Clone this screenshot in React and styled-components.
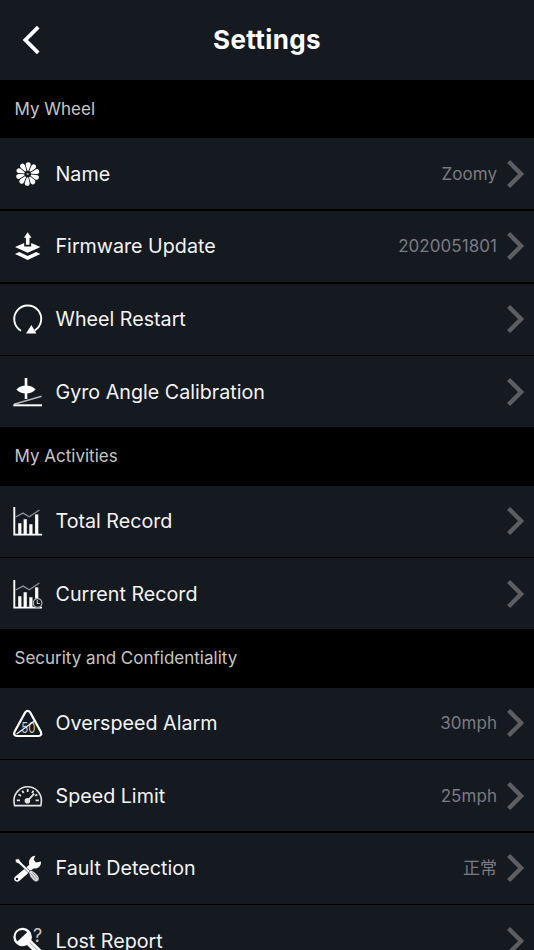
import React from 'react';
import styled, { createGlobalStyle } from 'styled-components';

const GlobalStyle = createGlobalStyle`
  html, body {
    margin: 0;
    padding: 0;
    background: #000;
  }
  body {
    height: 950px;
    overflow: hidden;
    font-family: Inter, "Noto Sans CJK SC", sans-serif;
  }
  * {
    box-sizing: border-box;
  }
`;

const Page = styled.main`
  width: 534px;
  height: 950px;
  overflow: hidden;
  background: #000;
`;

const Header = styled.header`
  display: grid;
  grid-template-columns: 64px 1fr 64px;
  align-items: center;
  height: 80px;
  background: #151920;
`;

const BackButton = styled.button`
  display: flex;
  align-items: center;
  height: 100%;
  padding: 0 0 0 20px;
  border: 0;
  background: none;
`;

const Title = styled.h1`
  margin: 0;
  color: #fff;
  font-size: 26px;
  font-weight: 700;
  line-height: 32px;
  letter-spacing: 0.4px;
  text-align: center;
`;

const SectionTitle = styled.h2`
  display: flex;
  align-items: center;
  height: 58.4px;
  margin: 0;
  padding: 0 14.5px 1px;
  color: #c6c6c6;
  font-size: 17px;
  font-weight: 400;
`;

const List = styled.div`
  display: flex;
  flex-direction: column;
  gap: 1.6px;
`;

const Row = styled.div`
  display: flex;
  align-items: center;
  height: 71px;
  padding: 0 8px 0 12px;
  background: #151920;
`;

const RowIcon = styled.svg`
  flex: none;
  width: 32px;
  height: 32px;
  margin-right: 11.5px;
  overflow: visible;
  fill: #fff;
`;

const Label = styled.span`
  flex: 1;
  color: #f4f4f5;
  font-size: 19.7px;
  line-height: 18px;
`;

const Value = styled.span`
  margin-right: 8px;
  color: #797c84;
  font-size: 17px;
  line-height: 24px;
  letter-spacing: 0.05px;
`;

const Arrow = styled.svg`
  flex: none;
  width: 21px;
  height: 30px;
  fill: none;
  stroke: #5d5e61;
  stroke-width: 4.4;
`;

const Line = styled.g`
  fill: none;
  stroke: ${(props) => props.$color || '#fff'};
  stroke-width: ${(props) => props.$width || 2};
`;

const Glyph = styled.text`
  fill: #c4c5c8;
  font-family: Inter, sans-serif;
  font-size: ${(props) => props.$size}px;
`;

const petals = Array.from({ length: 10 }, (_, i) => i * 36 + 3);

const FlowerIcon = () => (
  <RowIcon viewBox="0 0 32 32">
    {petals.map((angle) => (
      <path
        key={angle}
        transform={`rotate(${angle} 15.7 16)`}
        d="M15 12.6L13.3 7.2Q13 4.2 15.7 4.2Q18.4 4.2 18.1 7.2L16.4 12.6Z"
      />
    ))}
    <circle cx="15.7" cy="16" r="1.1" fill="#aaa" />
  </RowIcon>
);

const FirmwareIcon = () => (
  <RowIcon viewBox="0 0 32 32">
    <path d="M15.7 2.2L19.5 7.8H17.5V14.8H13.9V7.8H11.9Z" />
    <path d="M3 16.9L12.2 12.9V16.4H19.2V12.9L28.4 16.9L15.7 22.8Z" />
    <path d="M3 23.9L7.2 21.9L15.7 25.9L24.2 21.9L28.4 23.9L15.7 30.1Z" />
  </RowIcon>
);

const RestartIcon = () => (
  <RowIcon viewBox="0 0 32 32">
    <Line $width={1.9}>
      <path d="M9 27.7A13.5 13.5 0 1 1 22.6 27.6" />
    </Line>
    <path d="M14 30.4H24.4L19.4 22Z" />
  </RowIcon>
);

const GyroIcon = () => (
  <RowIcon viewBox="0 0 32 32">
    <path d="M12.7 2H15.3V23H12.7Z" />
    <path d="M4.4 13.5Q8 9.6 14 9.6T23.6 13.5Q20 17.4 14 17.4T4.4 13.5Z" />
    <Line $width={1.7} $color="#b5b6b8">
      <path d="M2 28.3L29.6 20.2" />
    </Line>
    <Line $width={2}>
      <path d="M1.3 29.3H30" />
    </Line>
  </RowIcon>
);

const ChartShape = ({ clock }) => (
  <>
    <Line $width={1.9}>
      <path d="M2.3 2V29.6H30" />
    </Line>
    <Line $width={3.2}>
      <path d="M7.8 29V18.2M13.2 29V14.3M18.9 29V19.3" />
      <path d={clock ? 'M24.7 21V9.4' : 'M24.7 29V9.4'} />
    </Line>
    <Line $width={1.3} $color="#8e9094">
      <path d="M3.5 12L11.1 8.1L17.3 11.8L27.4 5" />
    </Line>
  </>
);

const TotalIcon = () => (
  <RowIcon viewBox="0 0 32 32">
    <ChartShape />
  </RowIcon>
);

const CurrentIcon = () => (
  <RowIcon viewBox="0 0 32 32">
    <ChartShape clock />
    <circle cx="25.6" cy="25" r="4.8" fill="#151920" />
    <Line $width={1.2} $color="#b4b6b9">
      <circle cx="25.6" cy="25" r="4.3" />
      <path d="M25.3 22V25.5H28" />
    </Line>
  </RowIcon>
);

const AlarmIcon = () => (
  <RowIcon viewBox="0 0 32 32">
    <Line $width={2.2}>
      <path d="M13.2 5.4Q15.7 2.4 18.2 5.4L28.8 24.6Q30.4 28.8 26.4 29H5Q1 28.8 2.6 24.6Z" />
    </Line>
    <Glyph x="9.2" y="26.2" $size={14.6} textLength="14.2" lengthAdjust="spacingAndGlyphs">50</Glyph>
    <Line $width={1.4} $color="#f0f0f1">
      <path d="M4.6 27L23.4 13.2" />
    </Line>
  </RowIcon>
);

const LimitIcon = () => (
  <RowIcon viewBox="0 0 32 32">
    <Line $width={1.6} $color="#e4e4e5">
      <path d="M2.6 25.6Q2 23.5 2 20.5A13.7 13.7 0 0 1 29.4 20.5Q29.4 23.5 28.8 25.6Z" />
    </Line>
    <Line $width={1.8} $color="#e4e4e5">
      <path d="M4.8 20.4H8M23.6 20.4H26.8M6.5 14.2L9 15.9M10.2 10.7L11.7 13.1M15.7 9V12M21.4 10.7L20 13.1M23.2 15.8L25.3 14.5" />
      <path d="M15.7 20.6L22.2 13.6" />
    </Line>
    <circle cx="15.4" cy="20.8" r="2.8" fill="#e4e4e5" />
  </RowIcon>
);

const ToolsIcon = () => (
  <RowIcon viewBox="0 0 32 32">
    <path d="M17.3 12.8C16 8.4 19 3.8 23.3 3.8L21.6 7.6L24 10.6L28.9 9.5C29.6 14 25.5 17.4 21.4 16.4L7.2 29.1C4 31.2.7 27.6 2.8 25Z" />
    <circle cx="4.9" cy="27" r="1.2" fill="#151920" />
    <path d="M3.2 7.2L6.8 6.8L8.9 10L18.4 19.4L16.8 21L6.9 11.8L3.8 10.4Z" stroke="#151920" strokeWidth="0.6" />
    <path d="M16.7 20.5L19 18.2Q22.5 19 26.4 24.2Q28 27.2 26 29.1Q24 30.8 21.4 28.6Q17.4 24.6 16.7 20.5Z" fill="#dfdfe0" stroke="#151920" strokeWidth="0.6" />
    <Line $width={0.8} $color="#777a80">
      <path d="M18.7 21.3L23.8 27.7M20.5 20.3L25.7 26.3" />
    </Line>
  </RowIcon>
);

const LostIcon = () => (
  <RowIcon viewBox="0 0 32 32">
    <path d="M10.7 2.8A9.3 9.2 0 1 1 10.6 21.2A9.3 9.2 0 1 1 10.7 2.8ZM5.4 16.6L15.2 7.2C12.2 3.9 8.2 4.6 5.7 6.8C3 9.6 3.1 13.5 5.4 16.6Z" />
    <path d="M13.5 18.5L18 14L31 26.5V32H27Z" />
    <Line $width={0.8} $color="#8a8c90">
      <path d="M17.6 17.4L30 29.4" />
    </Line>
    <Glyph x="20.9" y="17.2" $size={18}>?</Glyph>
  </RowIcon>
);

const sections = [
  {
    title: 'My Wheel',
    rows: [
      { label: 'Name', value: 'Zoomy', Icon: FlowerIcon },
      { label: 'Firmware Update', value: '2020051801', Icon: FirmwareIcon },
      { label: 'Wheel Restart', Icon: RestartIcon },
      { label: 'Gyro Angle Calibration', Icon: GyroIcon },
    ],
  },
  {
    title: 'My Activities',
    rows: [
      { label: 'Total Record', Icon: TotalIcon },
      { label: 'Current Record', Icon: CurrentIcon },
    ],
  },
  {
    title: 'Security and Confidentiality',
    rows: [
      { label: 'Overspeed Alarm', value: '30mph', Icon: AlarmIcon },
      { label: 'Speed Limit', value: '25mph', Icon: LimitIcon },
      { label: 'Fault Detection', value: '正常', Icon: ToolsIcon },
      { label: 'Lost Report', Icon: LostIcon },
    ],
  },
];

export default function App() {
  return (
    <Page>
      <GlobalStyle />
      <Header>
        <BackButton aria-label="Back">
          <svg width="22" height="32" viewBox="0 0 22 32" fill="none" stroke="#fff" strokeWidth="3.8">
            <path d="M18.2 3.2L5.4 16L18.2 28.8" />
          </svg>
        </BackButton>
        <Title>Settings</Title>
      </Header>
      {sections.map(({ title, rows }) => (
        <section key={title}>
          <SectionTitle>{title}</SectionTitle>
          <List>
            {rows.map(({ label, value, Icon }) => (
              <Row key={label}>
                <Icon />
                <Label>{label}</Label>
                {value && <Value>{value}</Value>}
                <Arrow viewBox="0 0 21 30">
                  <path d="M3.6 2.5L16.1 15L3.6 27.5" />
                </Arrow>
              </Row>
            ))}
          </List>
        </section>
      ))}
    </Page>
  );
}
